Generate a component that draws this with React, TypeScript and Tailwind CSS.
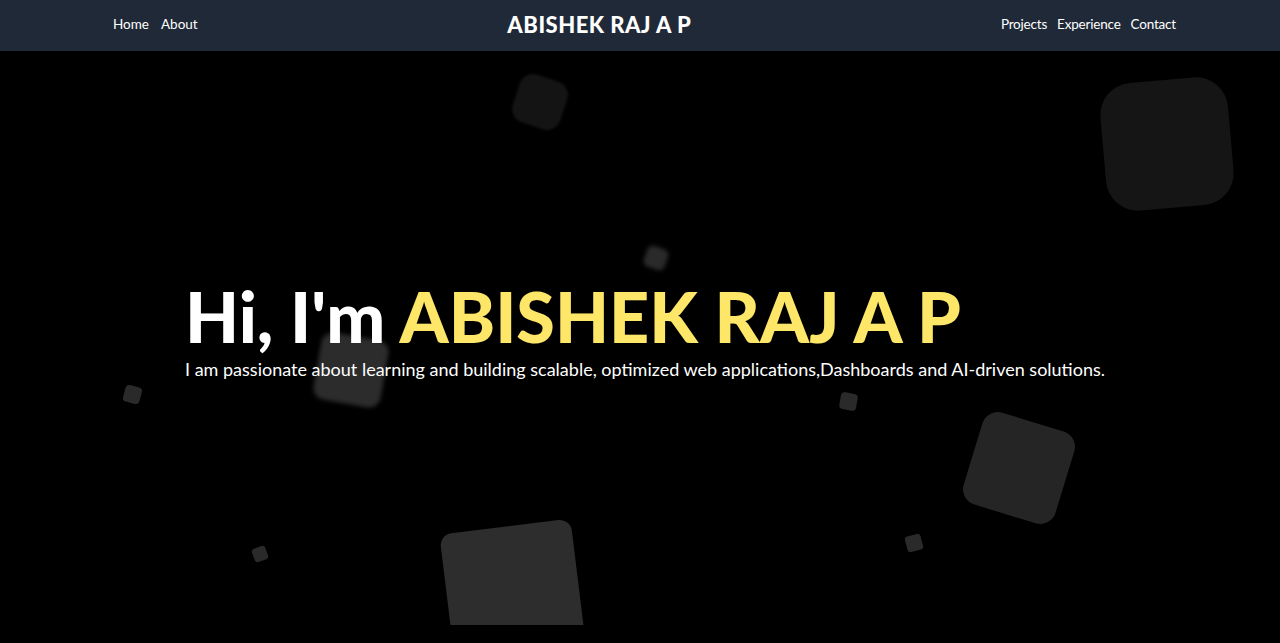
const shapes = [
  { c: "left-[515px] top-[26px] w-[50px] h-[50px] rounded-[14px] rotate-[18deg] bg-[#141414] blur-[1px]" },
  { c: "left-[1103px] top-[29px] w-[128px] h-[128px] rounded-[32px] -rotate-[5deg] bg-[#151515]" },
  { c: "left-[645px] top-[196px] w-[22px] h-[22px] rounded-[6px] rotate-[20deg] bg-[#2a2a2a] blur-[2px]" },
  { c: "left-[317px] top-[285px] w-[68px] h-[68px] rounded-[12px] rotate-[10deg] bg-[#2c2c2c] blur-[2px]" },
  { c: "left-[124px] top-[335px] w-[17px] h-[17px] rounded-[4px] rotate-[15deg] bg-[#2a2a2a]" },
  { c: "left-[840px] top-[342px] w-[17px] h-[17px] rounded-[4px] rotate-[10deg] bg-[#2a2a2a]" },
  { c: "left-[971px] top-[369px] w-[96px] h-[96px] rounded-[16px] rotate-[17deg] bg-[#252525]" },
  { c: "left-[906px] top-[484px] w-[16px] h-[16px] rounded-[3px] -rotate-[15deg] bg-[#2a2a2a]" },
  { c: "left-[253px] top-[496px] w-[14px] h-[14px] rounded-[3px] -rotate-[20deg] bg-[#2a2a2a]" },
  { c: "left-[448px] top-[475px] w-[132px] h-[150px] rounded-[12px] -rotate-[7deg] bg-[#2d2d2d]" },
];

const font = { fontFamily: 'Lato, "Open Sans", sans-serif' };

export default function App() {
  return (
    <div className="min-h-screen bg-black" style={font}>
      <nav className="h-[51px] bg-[#1f2937]">
        <div className="ml-[113px] flex h-full w-[1063px] items-center justify-between pb-[3px]">
          <div className="flex gap-[12px] text-[13.5px] text-white">
            <a href="#">Home</a>
            <a href="#">About</a>
          </div>
          <div className="text-[22px] font-black tracking-[0.5px] text-white">ABISHEK RAJ A P</div>
          <div className="flex gap-[10px] text-[13.5px] tracking-[-0.2px] text-white">
            <a href="#">Projects</a>
            <a href="#">Experience</a>
            <a href="#">Contact</a>
          </div>
        </div>
      </nav>
      <section className="relative h-[574px] overflow-hidden">
        {shapes.map((s, i) => (
          <div key={i} className={"absolute " + s.c} />
        ))}
        <div className="relative flex h-full flex-col justify-center pl-[185px] pb-[14px]">
          <h1 className="text-[70px] font-black leading-[1.07] text-white">
            Hi, I'm <span className="text-[#fde668]">ABISHEK RAJ A P</span>
          </h1>
          <p className="mt-[2px] text-lg text-white">
            I am passionate about learning and building scalable, optimized web applications,Dashboards and AI-driven solutions.
          </p>
        </div>
      </section>
    </div>
  );
}
